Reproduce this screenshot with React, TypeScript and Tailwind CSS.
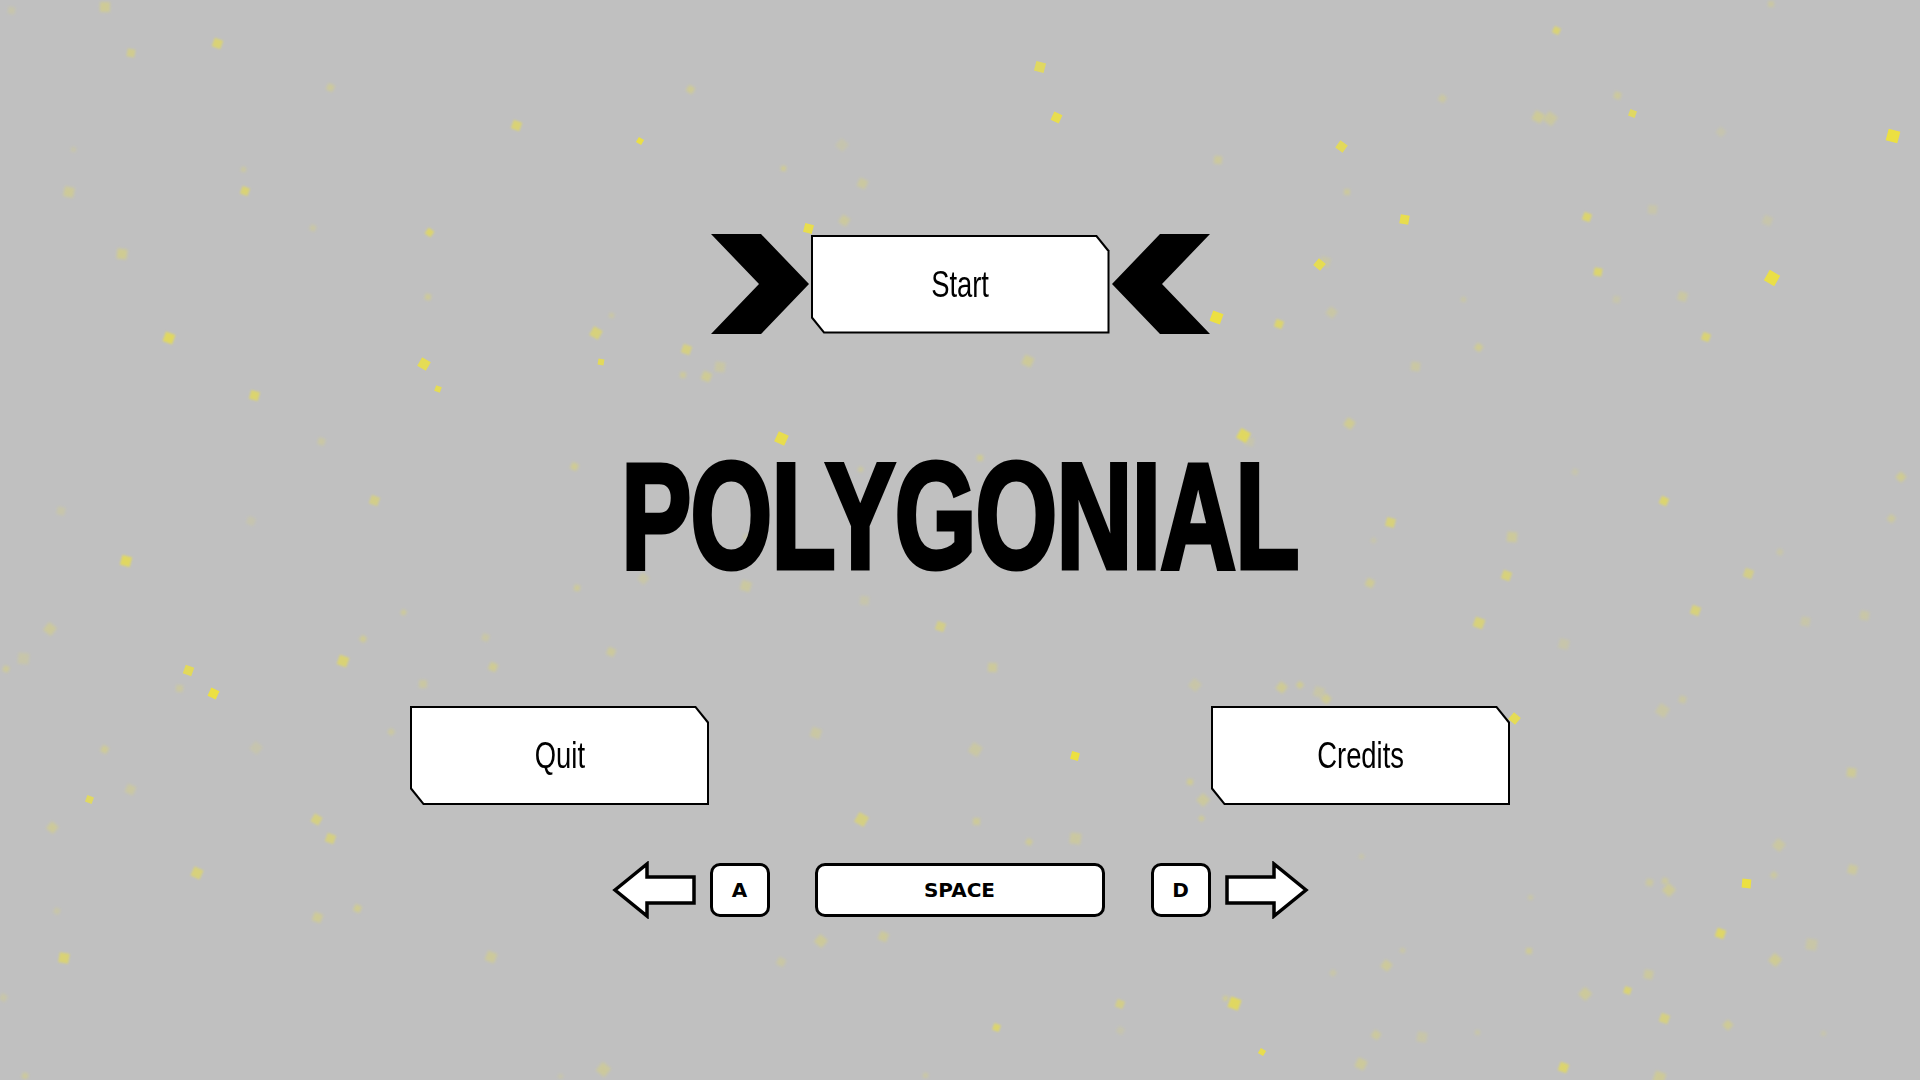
import React from 'react';

type Particle = { x: number; y: number; s: number; o: number; r: number; b: number };

// hand-placed sparks picked off the menu background
const sparks: Particle[] = [
  { x: 213, y: 39, s: 9, o: 0.55, r: 20, b: 1 },
  { x: 127, y: 49, s: 8, o: 0.35, r: 10, b: 1 },
  { x: 637, y: 138, s: 6, o: 0.9, r: 30, b: 0 },
  { x: 1035, y: 62, s: 10, o: 0.7, r: 15, b: 0 },
  { x: 1052, y: 113, s: 9, o: 0.85, r: 25, b: 0 },
  { x: 804, y: 224, s: 9, o: 0.85, r: 15, b: 0 },
  { x: 1211, y: 312, s: 11, o: 0.95, r: 20, b: 0 },
  { x: 1337, y: 142, s: 9, o: 0.75, r: 35, b: 0 },
  { x: 1400, y: 215, s: 9, o: 0.85, r: 10, b: 0 },
  { x: 1315, y: 260, s: 9, o: 0.8, r: 40, b: 0 },
  { x: 1887, y: 130, s: 12, o: 0.95, r: 15, b: 0 },
  { x: 1766, y: 272, s: 12, o: 0.9, r: 30, b: 0 },
  { x: 1583, y: 213, s: 8, o: 0.6, r: 20, b: 1 },
  { x: 1594, y: 268, s: 8, o: 0.6, r: 10, b: 1 },
  { x: 1553, y: 27, s: 7, o: 0.55, r: 25, b: 1 },
  { x: 1629, y: 110, s: 7, o: 0.7, r: 20, b: 0 },
  { x: 164, y: 333, s: 10, o: 0.7, r: 20, b: 1 },
  { x: 419, y: 359, s: 10, o: 0.8, r: 30, b: 0 },
  { x: 435, y: 386, s: 6, o: 0.8, r: 20, b: 0 },
  { x: 250, y: 391, s: 9, o: 0.6, r: 15, b: 1 },
  { x: 241, y: 187, s: 8, o: 0.55, r: 20, b: 1 },
  { x: 426, y: 229, s: 7, o: 0.6, r: 35, b: 1 },
  { x: 512, y: 121, s: 9, o: 0.55, r: 20, b: 1 },
  { x: 776, y: 433, s: 11, o: 0.85, r: 25, b: 0 },
  { x: 1238, y: 430, s: 11, o: 0.7, r: 30, b: 1 },
  { x: 1275, y: 320, s: 8, o: 0.6, r: 20, b: 1 },
  { x: 121, y: 556, s: 10, o: 0.7, r: 15, b: 1 },
  { x: 184, y: 666, s: 9, o: 0.75, r: 20, b: 0 },
  { x: 209, y: 689, s: 9, o: 0.95, r: 25, b: 0 },
  { x: 338, y: 656, s: 10, o: 0.55, r: 20, b: 1 },
  { x: 1071, y: 752, s: 8, o: 0.95, r: 15, b: 0 },
  { x: 1510, y: 714, s: 9, o: 0.8, r: 40, b: 0 },
  { x: 1742, y: 879, s: 9, o: 0.95, r: 5, b: 0 },
  { x: 1716, y: 929, s: 9, o: 0.65, r: 20, b: 1 },
  { x: 1229, y: 998, s: 11, o: 0.7, r: 20, b: 1 },
  { x: 1259, y: 1049, s: 6, o: 0.85, r: 30, b: 0 },
  { x: 1559, y: 1063, s: 9, o: 0.6, r: 20, b: 1 },
  { x: 59, y: 953, s: 10, o: 0.55, r: 10, b: 1 },
  { x: 86, y: 796, s: 7, o: 0.7, r: 20, b: 0 },
  { x: 192, y: 868, s: 10, o: 0.5, r: 25, b: 1 },
  { x: 1691, y: 606, s: 9, o: 0.5, r: 20, b: 1 },
  { x: 1660, y: 497, s: 8, o: 0.6, r: 25, b: 1 },
  { x: 1502, y: 571, s: 9, o: 0.5, r: 20, b: 1 },
  { x: 1386, y: 518, s: 9, o: 0.5, r: 15, b: 1 },
  { x: 1702, y: 333, s: 8, o: 0.55, r: 20, b: 1 },
  { x: 598, y: 359, s: 6, o: 0.75, r: 10, b: 0 },
  { x: 591, y: 328, s: 10, o: 0.5, r: 30, b: 1 },
  { x: 682, y: 345, s: 9, o: 0.45, r: 20, b: 1 },
  { x: 856, y: 814, s: 11, o: 0.45, r: 30, b: 1 },
  { x: 993, y: 1024, s: 7, o: 0.6, r: 20, b: 1 },
  { x: 1624, y: 987, s: 7, o: 0.55, r: 20, b: 1 },
  { x: 1660, y: 1014, s: 9, o: 0.45, r: 20, b: 1 },
  { x: 1744, y: 569, s: 9, o: 0.4, r: 20, b: 1 },
  { x: 1474, y: 618, s: 10, o: 0.5, r: 20, b: 1 },
  { x: 326, y: 834, s: 9, o: 0.45, r: 20, b: 1 },
  { x: 312, y: 815, s: 9, o: 0.45, r: 30, b: 1 },
  { x: 370, y: 496, s: 9, o: 0.4, r: 20, b: 1 },
  { x: 936, y: 622, s: 9, o: 0.4, r: 20, b: 1 },
  { x: 1116, y: 1000, s: 8, o: 0.4, r: 20, b: 1 },
];

// faint dust filling the rest of the canvas
function dust(): Particle[] {
  let seed = 7;
  const rnd = () => {
    seed = (seed * 16807) % 2147483647;
    return seed / 2147483647;
  };
  return Array.from({ length: 140 }, () => ({
    x: rnd() * 1920,
    y: rnd() * 1080,
    s: 5 + rnd() * 6,
    o: 0.12 + rnd() * 0.22,
    r: rnd() * 45,
    b: 1.5,
  }));
}

const allSparks = [...dust(), ...sparks];

const Chevron: React.FC<{ flip?: boolean }> = ({ flip }) => (
  <svg width="98" height="100" viewBox="0 0 98 100" className={flip ? '-scale-x-100' : ''}>
    <polygon points="0,0 50,0 98,50 50,100 0,100 48,50" fill="#000" />
  </svg>
);

const CutButton: React.FC<{ label: string }> = ({ label }) => (
  <div className="w-[299px] h-[99px] bg-black p-[2px] [clip-path:polygon(0_0,calc(100%-13px)_0,100%_16px,100%_100%,13px_100%,0_calc(100%-16px))]">
    <div className="w-full h-full bg-white flex items-center justify-center [clip-path:polygon(0_0,calc(100%-12px)_0,100%_15px,100%_100%,12px_100%,0_calc(100%-15px))]">
      <span className="text-[37px] text-black font-['Liberation_Sans',sans-serif] scale-x-[0.74] mt-[1px]">
        {label}
      </span>
    </div>
  </div>
);

const Key: React.FC<{ label: string; wide?: boolean }> = ({ label, wide }) => (
  <div
    className={`${wide ? 'w-[290px]' : 'w-[60px]'} h-[54px] bg-white border-[3px] border-black rounded-[10px] flex items-center justify-center font-['DejaVu_Sans',sans-serif] font-bold text-[20px] text-black`}
  >
    {label}
  </div>
);

const Arrow: React.FC<{ right?: boolean }> = ({ right }) => (
  <svg width="85" height="58" viewBox="0 0 85 58" className={right ? '-scale-x-100' : ''}>
    <polygon
      points="3,29 35,3 35,16 82,16 82,42 35,42 35,55"
      fill="#fff"
      stroke="#000"
      strokeWidth="3.5"
      strokeLinejoin="miter"
    />
  </svg>
);

export default function App() {
  return (
    <div className="relative w-[1920px] h-[1080px] overflow-hidden bg-[#c0c0c0]">
      {/* sparks layer */}
      <div className="absolute inset-0">
        {allSparks.map((p, i) => (
          <div
            key={i}
            className="absolute bg-[#eee23a]"
            style={{
              left: p.x,
              top: p.y,
              width: p.s,
              height: p.s,
              opacity: p.o,
              transform: `rotate(${p.r}deg)`,
              filter: p.b ? `blur(${p.b}px)` : undefined,
            }}
          />
        ))}
      </div>

      <div className="relative flex flex-col items-center pt-[234px]">
        <div className="flex items-center gap-[2px]">
          <Chevron />
          <CutButton label="Start" />
          <Chevron flip />
        </div>

        <h1 className="mt-[112px] h-[140px] flex items-center text-[150px] leading-none font-bold text-black font-['Liberation_Sans',sans-serif] scale-x-[0.7] tracking-[-1px] [-webkit-text-stroke:5px_black]">
          POLYGONIAL
        </h1>

        <div className="mt-[120px] w-[1100px] flex justify-between">
          <CutButton label="Quit" />
          <CutButton label="Credits" />
        </div>

        <div className="mt-[56px] flex items-center">
          <Arrow />
          <div className="ml-[13px]">
            <Key label="A" />
          </div>
          <div className="ml-[45px]">
            <Key label="SPACE" wide />
          </div>
          <div className="ml-[46px]">
            <Key label="D" />
          </div>
          <div className="ml-[13px]">
            <Arrow right />
          </div>
        </div>
      </div>
    </div>
  );
}
